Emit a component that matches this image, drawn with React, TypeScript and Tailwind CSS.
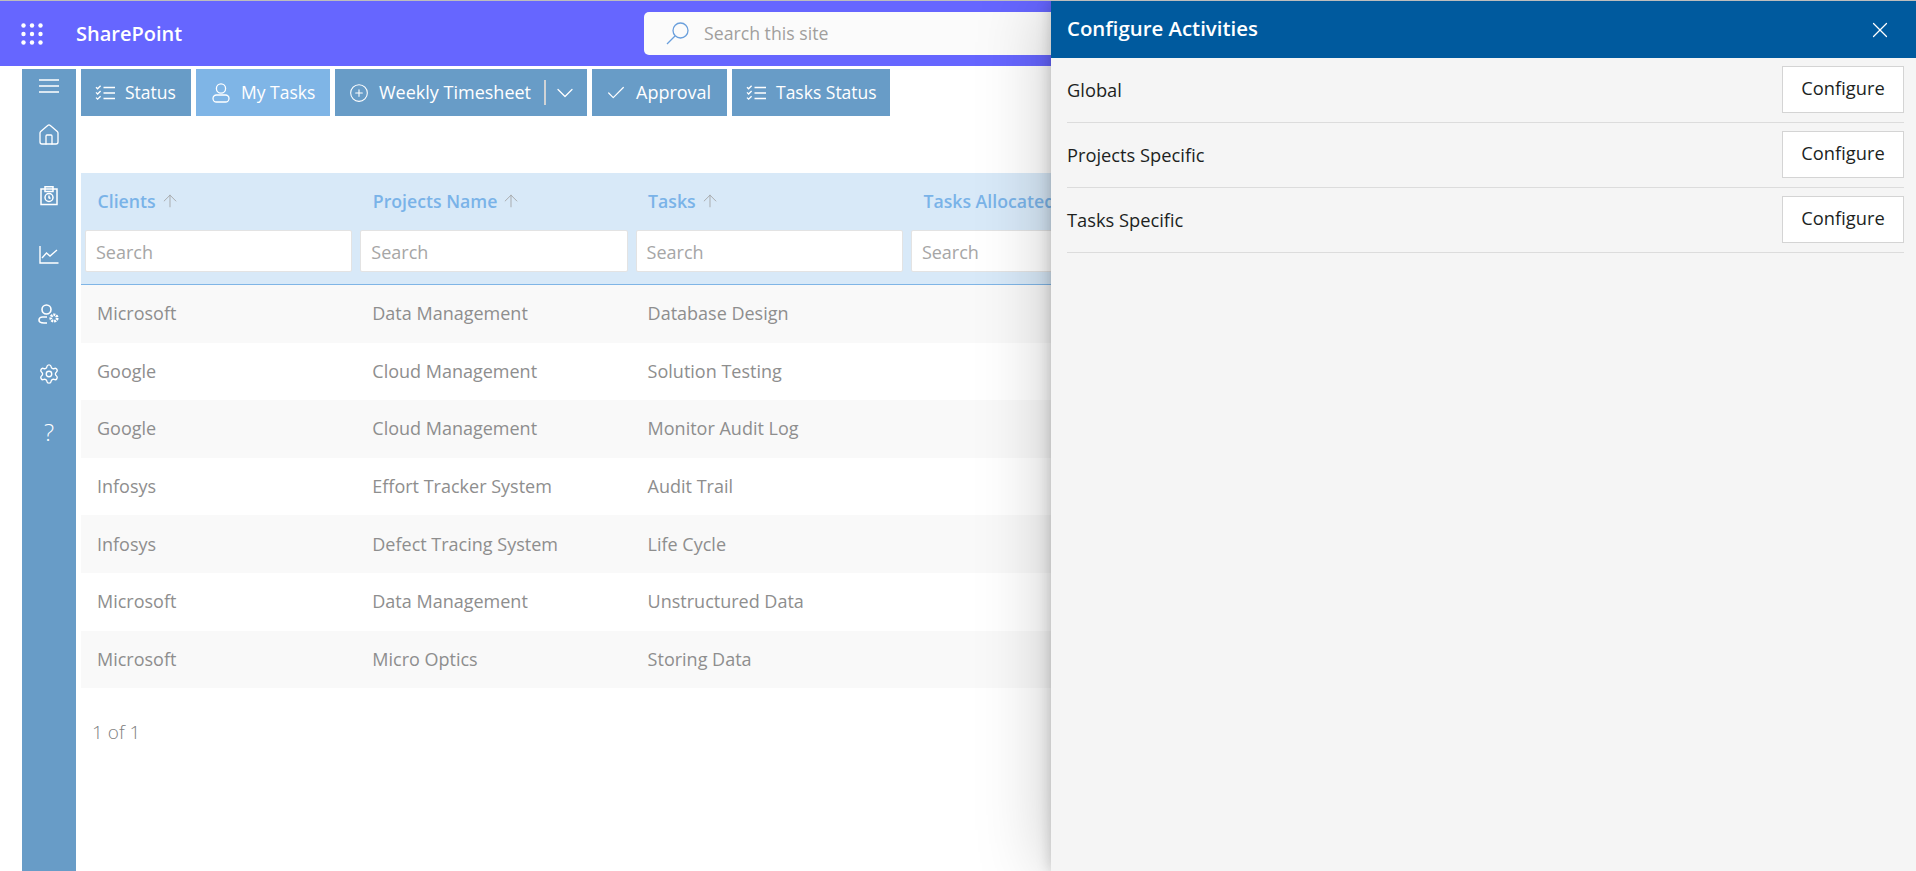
import { ArrowUp, Check, ChevronDown, CirclePlus, Home, Settings, X } from "lucide-react"

const columns = ["Clients", "Projects Name", "Tasks", "Tasks Allocated", "", ""]

const rows = [
  ["Microsoft", "Data Management", "Database Design"],
  ["Google", "Cloud Management", "Solution Testing"],
  ["Google", "Cloud Management", "Monitor Audit Log"],
  ["Infosys", "Effort Tracker System", "Audit Trail"],
  ["Infosys", "Defect Tracing System", "Life Cycle"],
  ["Microsoft", "Data Management", "Unstructured Data"],
  ["Microsoft", "Micro Optics", "Storing Data"],
]

const ChecklistIcon = () => (
  <svg width="20" height="16" viewBox="0 0 20 16" fill="none" stroke="white" strokeWidth="1.3" className="shrink-0">
    <path d="M1 2.2l1.6 1.6L5.6 .8M1 7.4l1.6 1.6 3-3M1 12.6l1.6 1.6 3-3" />
    <path d="M8.5 2.5H20M8.5 8H20M8.5 13.5H20" />
  </svg>
)

const PersonIcon = () => (
  <svg width="18" height="20" viewBox="0 0 18 20" fill="none" stroke="white" strokeWidth="1.3" className="shrink-0">
    <circle cx="9" cy="5.5" r="4.6" />
    <rect x="1" y="12" width="16" height="7" rx="3.5" />
  </svg>
)

const Waffle = () => (
  <svg width="22" height="22" viewBox="0 0 22 22" fill="white" className="shrink-0">
    {[2.5, 11, 19.5].map((y) =>
      [2.5, 11, 19.5].map((x) => <circle key={`${x}-${y}`} cx={x} cy={y} r="2.2" />),
    )}
  </svg>
)

const SidebarIcons = () => (
  <div className="flex flex-col items-center text-white">
    <svg width="20" height="14" viewBox="0 0 20 14" stroke="white" strokeWidth="1.4" className="mt-[10px]">
      <path d="M0 1h20M0 7h20M0 13h20" />
    </svg>
    <Home size={24} strokeWidth={1.3} className="mt-[30px]" />
    <svg width="20" height="20" viewBox="0 0 20 20" fill="none" stroke="white" strokeWidth="1.5" className="mt-[39px]">
      <path d="M2 3h16v15.500H2zM6 3V.8h8V3M6 3v2.500h8V3" />
      <circle cx="10" cy="11.500" r="4" />
      <path d="M10 9.500v2.200l1.500.8" />
    </svg>
    <svg width="20" height="18" viewBox="0 0 20 18" fill="none" stroke="white" strokeWidth="1.4" className="mt-[40px]">
      <path d="M1 0v17h18.500M3 12l4.500-5 3.500 3 7-6" />
    </svg>
    <svg width="22" height="20" viewBox="0 0 22 20" fill="none" stroke="white" strokeWidth="1.6" className="mt-[40px]">
      <circle cx="8.500" cy="5.500" r="4.500" />
      <path d="M9 13H4.500C2.500 13 1 14.300 1 16c0 1.800 2 3 5 3h3" />
      <circle cx="16" cy="14" r="3.200" strokeWidth="2.800" strokeDasharray="2 0.800" />
    </svg>
    <Settings size={22} strokeWidth={1.5} className="mt-[39px]" />
    <span className="mt-[31px] text-[24px] font-light leading-[32px]">?</span>
  </div>
)

const SortArrow = () => <ArrowUp size={20} strokeWidth={1} className="text-[#a0a0a0]" />

const App = () => {
  return (
    <div className="relative h-[871px] w-[1916px] overflow-hidden border-t border-[#bdbdbd] bg-white font-['Open_Sans',sans-serif]">
      <header className="relative flex h-[65px] items-center bg-[#6666ff]">
        <div className="ml-[21px]">
          <Waffle />
        </div>
        <span className="ml-[33px] w-[110px] text-[20px] font-semibold text-white">SharePoint</span>
        <div className="ml-[458px] flex h-[43px] w-[628px] items-center rounded-[5px] bg-[#fbfbfb] pl-[22px]">
          <svg width="23" height="23" viewBox="0 0 23 23" fill="none" stroke="#6a9fdc" strokeWidth="1.3">
            <circle cx="14.500" cy="8.500" r="7.500" />
            <path d="M9 14L1 22" />
          </svg>
          <span className="ml-[15px] text-[17.700px] text-[#a19f9d]">Search this site</span>
        </div>
      </header>

      <div className="flex">
        <nav className="ml-[22px] mt-[3px] h-[802px] w-[54px] shrink-0 bg-[#689cc7]">
          <SidebarIcons />
        </nav>

        <main className="ml-[5px] mt-[3px] min-w-0 flex-1">
          <div className="flex h-[47px] gap-[5px] text-[17.500px] text-white">
            <button className="flex w-[110px] items-center gap-[10px] bg-[#689cc7] pl-[14px]">
              <ChecklistIcon />
              Status
            </button>
            <button className="flex w-[134px] items-center gap-[11px] bg-[#7fb5e6] pl-[16px]">
              <PersonIcon />
              My Tasks
            </button>
            <button className="flex w-[252px] items-center bg-[#689cc7] pl-[14px]">
              <CirclePlus size={20} strokeWidth={1.3} className="shrink-0" />
              <span className="ml-[10px] w-[155px] whitespace-nowrap text-left text-[18px]">Weekly Timesheet</span>
              <span className="ml-[10px] h-[25px] w-[2px] shrink-0 bg-[#d0d3d6]" />
              <ChevronDown size={28} strokeWidth={1.1} className="ml-[5px] shrink-0" />
            </button>
            <button className="flex w-[135px] items-center gap-[9px] bg-[#689cc7] pl-[13px] text-[18px]">
              <Check size={22} strokeWidth={1.3} className="shrink-0" />
              Approval
            </button>
            <button className="flex w-[158px] items-center gap-[10px] bg-[#689cc7] pl-[14px]">
              <ChecklistIcon />
              Tasks Status
            </button>
          </div>

          <div className="mt-[57px] text-[18px]">
            <div className="h-[112px] w-[1835px] border-b border-[#7fb5e6] bg-[#d8e9f8]">
              <div className="flex h-[57px] items-center">
                {columns.map((col, i) => (
                  <div key={i} className="flex w-[275.300px] shrink-0 items-center gap-[4px] pl-[16.500px] text-[17.700px] font-semibold text-[#7ab3e8]">
                    {col}
                    {i < 3 && <SortArrow />}
                  </div>
                ))}
              </div>
              <div className="flex">
                {columns.map((col, i) => (
                  <div key={i} className="w-[275.300px] shrink-0 px-[4px]">
                    <div className="flex h-[42px] items-center rounded-[2px] border border-[#e3e3e3] bg-white pl-[10px] pt-[2px] text-[#a6a6a6]">
                      Search
                    </div>
                  </div>
                ))}
              </div>
            </div>

            {rows.map((row, i) => (
              <div key={i} className={`flex h-[57.600px] w-[1835px] items-center text-[#8e8e8e] ${i % 2 === 0 ? "bg-[#f9f9f9]" : "bg-white"}`}>
                {row.map((cell) => (
                  <div key={cell} className="w-[275.300px] shrink-0 pl-[16px]">
                    {cell}
                  </div>
                ))}
              </div>
            ))}

            <p className="ml-[11px] mt-[30px] text-[19px] font-light text-[#808080]">1 of 1</p>
          </div>
        </main>
      </div>

      <aside className="absolute bottom-0 right-0 top-0 w-[865px] bg-[#f5f5f5] shadow-[0_0_70px_rgba(0,0,0,0.22),0_0_14px_rgba(0,0,0,0.2)]">
        <div className="flex h-[57px] items-center justify-between bg-[#005a9e] pl-[16px] pr-[23px] text-white">
          <h2 className="pb-[3px] text-[20.400px] font-semibold">Configure Activities</h2>
          <X size={26} strokeWidth={1.1} />
        </div>
        <div className="pl-[16px] pr-[12px]">
          {["Global", "Projects Specific", "Tasks Specific"].map((label) => (
            <div key={label} className="flex h-[65px] items-center justify-between border-b border-[#dcdcdc] pb-[1px]">
              <span className="text-[18.300px] font-medium text-[#201f1e]">{label}</span>
              <button className="h-[47px] w-[122px] border border-[#d4d4d4] bg-white pb-[4px] text-[18.300px] font-medium text-[#201f1e]">
                Configure
              </button>
            </div>
          ))}
        </div>
      </aside>
    </div>
  )
}

export default App
